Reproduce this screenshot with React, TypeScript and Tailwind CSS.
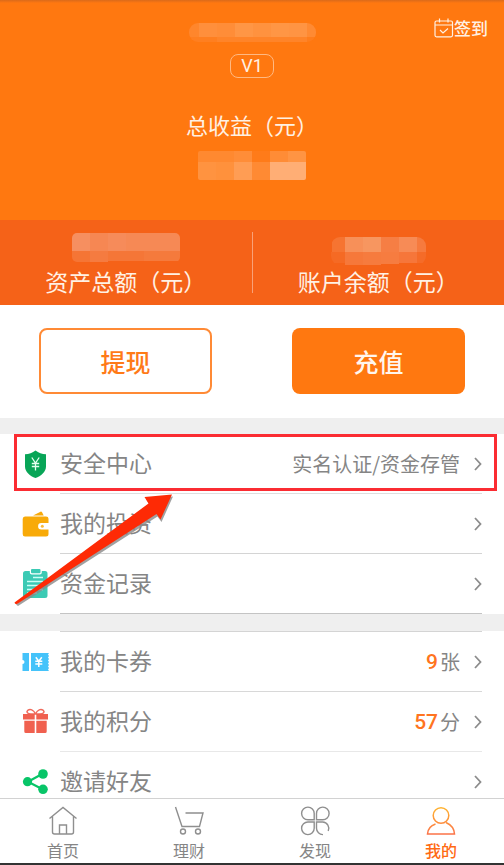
import type { ReactNode } from "react";

type Cell = [x: number, y: number, w: number, h: number, color: string];

function Mosaic({ width, height, radius, cells, id }: { width: number; height: number; radius: number; cells: Cell[]; id: string }) {
  return (
    <svg width={width} height={height} viewBox={`0 0 ${width} ${height}`} shapeRendering="crispEdges" aria-hidden="true">
      <clipPath id={id}>
        <rect width={width} height={height} rx={radius} />
      </clipPath>
      <g clipPath={`url(#${id})`}>
        {cells.map(([x, y, w, h, color]) => (
          <rect key={`${x}-${y}`} x={x} y={y} width={w} height={h} fill={color} />
        ))}
      </g>
    </svg>
  );
}

const nameCells: Cell[] = [
  [0, 0, 10, 14, "#ff862c"], [10, 0, 18, 14, "#ff8f3c"], [28, 0, 18, 14, "#ff8d38"], [46, 0, 18, 14, "#ff9645"],
  [64, 0, 18, 14, "#ff923f"], [82, 0, 18, 14, "#ff9645"], [100, 0, 18, 14, "#ff9443"], [118, 0, 9, 14, "#ff8a33"],
  [0, 14, 28, 5, "#ff7f20"], [28, 14, 90, 5, "#ff8429"], [118, 14, 9, 5, "#ff7d1c"],
];

const incomeCells: Cell[] = [
  [0, 0, 36, 11, "#ff8930"], [36, 0, 18, 11, "#ff8d38"], [54, 0, 18, 11, "#ff7b19"], [72, 0, 18, 11, "#ff8c36"], [90, 0, 18, 11, "#ff9443"],
  [0, 11, 18, 18, "#ff9340"], [18, 11, 18, 18, "#ff913c"], [36, 11, 18, 18, "#ff9d54"], [54, 11, 18, 18, "#ff8a33"], [72, 11, 36, 18, "#ffae75"],
];

const assetCells: Cell[] = [
  [0, 0, 18, 18, "#f68f60"], [18, 0, 18, 18, "#f68753"], [36, 0, 18, 18, "#f68b5a"], [54, 0, 54, 18, "#f68955"],
  [0, 18, 18, 11, "#f57535"], [18, 18, 18, 11, "#f57b40"], [36, 18, 36, 10, "#f57637"], [72, 18, 36, 10, "#f57a3c"],
];

const balanceCells: Cell[] = [
  [1, 0, 13, 15, "#f67431"], [14, 0, 18, 15, "#f79059"], [32, 0, 18, 15, "#f79660"], [50, 0, 18, 15, "#f67e44"], [68, 0, 18, 15, "#f78b56"], [86, 0, 9, 15, "#f67a3e"],
  [0, 15, 14, 11, "#f56a24"], [14, 15, 18, 13, "#f6783a"], [32, 15, 18, 13, "#f67b3e"], [50, 15, 18, 12, "#f67c40"], [68, 15, 18, 11, "#f6763a"], [86, 15, 9, 11, "#f56b28"],
];

function ShieldIcon() {
  return (
    <svg className="h-7 w-7" viewBox="0 0 28 28" aria-hidden="true">
      <path d="M13.500 0.500c3 2.500 6.500 3.500 10.500 3.800v12.200c0 5.500-5 9.500-10.500 11.500C8 26 3 22 3 16.500V4.300C7 4 10.500 3 13.500 .5z" fill="#08a557" />
      <path d="M9.800 7.500l3.700 5.500 3.700-5.500M13.500 13v7.500M9.800 13.500h7.400M9.800 16.500h7.400" fill="none" stroke="#e4fff0" strokeWidth="1.300" />
    </svg>
  );
}

function WalletIcon() {
  return (
    <svg className="h-7 w-7" viewBox="0 0 28 28" aria-hidden="true">
      <path d="M11 5.500l7-3.600a1.600 1.600 0 0 1 2.200.7l1.500 2.900z" fill="#f8aa08" />
      <path d="M3 6.500h21q2.500 0 2.500 2.300v4.200h-7.200a3.200 3.200 0 0 0 0 6.400h7.200v4.600q0 2.500-2.500 2.500H3Q.700 26.500.700 24V9Q.700 6.500 3 6.500z" fill="#f8aa08" />
      <circle cx="20.300" cy="16.200" r="1.500" fill="#f8b93a" />
    </svg>
  );
}

function ClipboardIcon() {
  return (
    <svg className="h-7 w-7 overflow-visible" viewBox="0 0 28 28" aria-hidden="true">
      <path d="M3.500 1h4.300v1.500q0 2 2 2h8q2 0 2-2V1H23q2.500 0 2.500 2.500v22Q25.500 28 23 28H3.500Q1 28 1 25.500v-22Q1 1 3.500 1z" fill="#3bcab4" />
      <rect x="9" y="-1" width="9.500" height="4.200" rx="1" fill="#3bcab4" />
      <path d="M11 7.500h10M5 11.500h16M5 15.500h16M5 19.500h16M5 23h10" stroke="#c9fff5" strokeWidth="1.400" />
    </svg>
  );
}

function TicketIcon() {
  return (
    <svg className="h-7 w-7" viewBox="0 0 28 28" aria-hidden="true">
      <path d="M.500 5H7v18H.500v-7a2 2 0 0 0 0-4z" fill="#45c3fa" />
      <path d="M9 5h18l-1 1.500 1 1.500-1 1.500 1 1.500-1 1.500 1 1.500-1 1.500 1 1.500-1 1.500 1 1.500-1 1.500 1 1.500H9z" fill="#45c3fa" />
      <path d="M13.800 9.200l3 4 3-4M16.800 13v6M13.300 13.200h7M13.300 16h7" fill="none" stroke="#fff" strokeWidth="1.500" />
    </svg>
  );
}

function GiftIcon() {
  return (
    <svg className="h-7 w-7" viewBox="0 0 28 28" aria-hidden="true">
      <path d="M13.500 6C11.500 1.500 8 .800 6 2.200S5 6 9 6zM13.500 6C15.500 1.500 19 .800 21 2.200S22 6 18 6z" fill="none" stroke="#f0695a" strokeWidth="1.500" />
      <path d="M1 6h11.700v5.500H1zM14.300 6H26v5.500H14.300zM2.300 12.800h10.400V25H3.800q-1.500 0-1.500-1.500zM14.300 12.800h10.400v10.700q0 1.500-1.500 1.500h-8.900z" fill="#f0604f" />
    </svg>
  );
}

function ShareIcon() {
  return (
    <svg className="h-7 w-7" viewBox="0 0 28 28" aria-hidden="true">
      <path d="M21 5.500L6 13.700l15 7.800" fill="none" stroke="#08c568" strokeWidth="2.200" />
      <circle cx="5.500" cy="13.700" r="4.600" fill="#08c568" />
      <circle cx="21" cy="6" r="4.800" fill="#08c568" />
      <circle cx="21" cy="21.300" r="4.800" fill="#08c568" />
    </svg>
  );
}

function Row({ icon, label, line, children }: { icon: ReactNode; label: string; line: string; children?: ReactNode }) {
  return (
    <li>
      <a href="#" className="flex h-[60px] items-center gap-[10px] px-[22px]">
        {icon}
        <span className={`flex h-full flex-1 items-center border-b ${line}`}>
          <span className="pb-[3px] text-[23px] leading-8">{label}</span>
          <span className="ml-auto flex items-center gap-[2px] text-[20px] leading-8">{children}</span>
          <svg className="ml-[14px] h-[14px] w-2" viewBox="0 0 8 14" fill="none" stroke="#8c8c8c" strokeWidth="1.800" aria-hidden="true">
            <path d="M1 1l5.500 6L1 13" />
          </svg>
        </span>
      </a>
    </li>
  );
}

function Tab({ label, active, children }: { label: string; active?: boolean; children: ReactNode }) {
  return (
    <a
      href="#"
      aria-current={active ? "page" : undefined}
      className={`flex flex-col items-center gap-[2px] pt-[7px] text-[16px] leading-5 ${active ? "font-medium text-[#ff6a13]" : "text-[#858585]"}`}
    >
      {children}
      {label}
    </a>
  );
}

export default function App() {
  return (
    <div className="flex h-screen flex-col overflow-hidden bg-white font-['Noto_Sans_CJK_SC','Noto_Sans',sans-serif] text-[#858585]">
      <header className="shrink-0 text-[#fff1e4]">
        <div className="flex flex-col items-center bg-[#ff7810] pb-10">
          <div className="h-[3px] w-full bg-linear-to-b from-[#db6a1a] to-[#ff7810]" />
          <div className="mt-[13px] grid w-full grid-cols-[1fr_auto_1fr] px-4">
            <div className="col-start-2 flex h-[26px] items-end">
              <Mosaic id="name" width={127} height={19} radius={9} cells={nameCells} />
            </div>
            <button type="button" className="flex h-6 items-center justify-self-end text-[17px] font-medium leading-6">
              <svg className="h-5 w-5" viewBox="0 0 20 20" fill="none" stroke="currentColor" strokeWidth="1.200" aria-hidden="true">
                <rect x="1" y="3" width="17.500" height="15.800" rx="1.500" />
                <path d="M1 7h17.500M5.500.500v4M14 .500v4M6 12l3 3 5-4.500" />
              </svg>
              签到
            </button>
          </div>
          <span className="mt-3 flex h-6 items-center rounded-lg border border-[#ffb982] px-[10px] font-[Roboto] text-[18px] leading-5">V1</span>
          <h1 className="mt-[30px] text-[22px] leading-8">总收益（元）</h1>
          <div className="mt-[11px] h-[29px]">
            <Mosaic id="income" width={108} height={29} radius={2} cells={incomeCells} />
          </div>
        </div>
        <div className="flex bg-[#f56218]">
          <div className="flex flex-1 flex-col items-center pb-2 pt-[13px]">
            <div className="h-8">
              <Mosaic id="assets" width={108} height={29} radius={5} cells={assetCells} />
            </div>
            <p className="text-[23px] leading-8">资产总额（元）</p>
          </div>
          <div className="my-3 w-px bg-[#f9a178]" />
          <div className="flex flex-1 flex-col items-center pb-2 pt-[13px]">
            <div className="flex h-8 items-end">
              <Mosaic id="balance" width={95} height={28} radius={9} cells={balanceCells} />
            </div>
            <p className="text-[23px] leading-8">账户余额（元）</p>
          </div>
        </div>
      </header>

      <main className="min-h-0 flex-1 overflow-hidden">
        <div className="grid grid-cols-2 gap-20 px-[39px] pb-6 pt-[23px]">
          <button type="button" className="h-[66px] rounded-lg border-2 border-[#ff8a35] pt-[2px] text-[25px] font-medium text-[#ff7a17]">提现</button>
          <button type="button" className="h-[66px] rounded-lg bg-[#ff7810] pt-[2px] text-[25px] font-medium text-[#fff6ee]">充值</button>
        </div>

        <div className="h-4 bg-[#efefef]" />
        <div className="relative">
          <ul>
            <Row icon={<ShieldIcon />} label="安全中心" line="border-[#dedede]">实名认证/资金存管</Row>
            <Row icon={<WalletIcon />} label="我的投资" line="border-[#d4d4d4]" />
            <Row icon={<ClipboardIcon />} label="资金记录" line="border-[#c4c4c4]" />
          </ul>
          <div className="pointer-events-none absolute left-[14px] right-[7px] top-0 h-[57px] border-[3px] border-[#fb2c32]" />
          <svg className="pointer-events-none absolute left-[14px] top-[60px] h-[114px] w-[162px]" viewBox="0 0 162 114" aria-hidden="true">
            <path d="M159 2.500L132 5l4 6.500L2 110.500l2 1.500L143.500 22.500l4 5.500z" fill="#8a8a8a" opacity=".8" />
            <path d="M158 .500L130.500 3l4 6.500L.500 108.500q.500 2 2.500 1.500L142.500 20l4 5.500z" fill="#fe2a05" />
          </svg>
        </div>

        <div className="h-[17px] bg-[#efefef]" />
        <div className="ml-[60px] mr-[22px] h-px bg-[#d4d4d4]" />
        <ul>
          <Row icon={<TicketIcon />} label="我的卡券" line="border-[#d8d8d8]">
            <b className="font-[Roboto] text-[21px] font-medium text-[#ff7420]">9</b>张
          </Row>
          <Row icon={<GiftIcon />} label="我的积分" line="border-[#e8e8e8]">
            <b className="font-[Roboto] text-[21px] font-medium text-[#ff7420]">57</b>分
          </Row>
          <Row icon={<ShareIcon />} label="邀请好友" line="border-[#e8e8e8]" />
        </ul>
      </main>

      <nav className="grid h-[67px] shrink-0 grid-cols-4 border-b-2 border-t border-b-[#333] border-t-[#d2d2d2] bg-white">
        <Tab label="首页">
          <svg className="h-8 w-8" viewBox="0 0 32 32" fill="none" stroke="#8f8f8f" strokeWidth="1.400" aria-hidden="true">
            <path d="M2.500 12.500L16 1.500l13.500 11M5.500 10.500V26q0 2 2 2h17q2 0 2-2V10.500M12.500 28v-9h7v9" />
          </svg>
        </Tab>
        <Tab label="理财">
          <svg className="h-8 w-8" viewBox="0 0 32 32" fill="none" stroke="#8f8f8f" strokeWidth="1.400" aria-hidden="true">
            <path d="M2.500 1l6.500 19.500h17.500L30 7H12.500" />
            <circle cx="10" cy="25.500" r="2.500" />
            <circle cx="25" cy="25.500" r="2.500" />
          </svg>
        </Tab>
        <Tab label="发现">
          <svg className="h-8 w-8" viewBox="0 0 32 32" fill="none" stroke="#8f8f8f" strokeWidth="1.400" aria-hidden="true">
            <path d="M15.200 13.700H9A6.300 6.300 0 1 1 15.200 7.500zM17.500 13.700h6.200A6.300 6.300 0 1 0 17.500 7.500zM15.200 16H9a6.300 6.300 0 1 0 6.200 6.300zM24 28.600a6.300 6.300 0 0 1-6.500-6.300V16h6.200a6.300 6.300 0 0 1 5.500 9" />
          </svg>
        </Tab>
        <Tab label="我的" active>
          <svg className="h-8 w-8" viewBox="0 0 32 32" fill="none" stroke="url(#profile)" strokeWidth="1.500" aria-hidden="true">
            <defs>
              <linearGradient id="profile" gradientUnits="userSpaceOnUse" x1="0" y1="1" x2="0" y2="29">
                <stop offset="0" stopColor="#ffb530" />
                <stop offset="1" stopColor="#fb7048" />
              </linearGradient>
            </defs>
            <circle cx="16" cy="9.500" r="7.800" />
            <path d="M10.500 18Q3 20.500 2.500 28h27Q29 20 21 16.500" />
          </svg>
        </Tab>
      </nav>
    </div>
  );
}
